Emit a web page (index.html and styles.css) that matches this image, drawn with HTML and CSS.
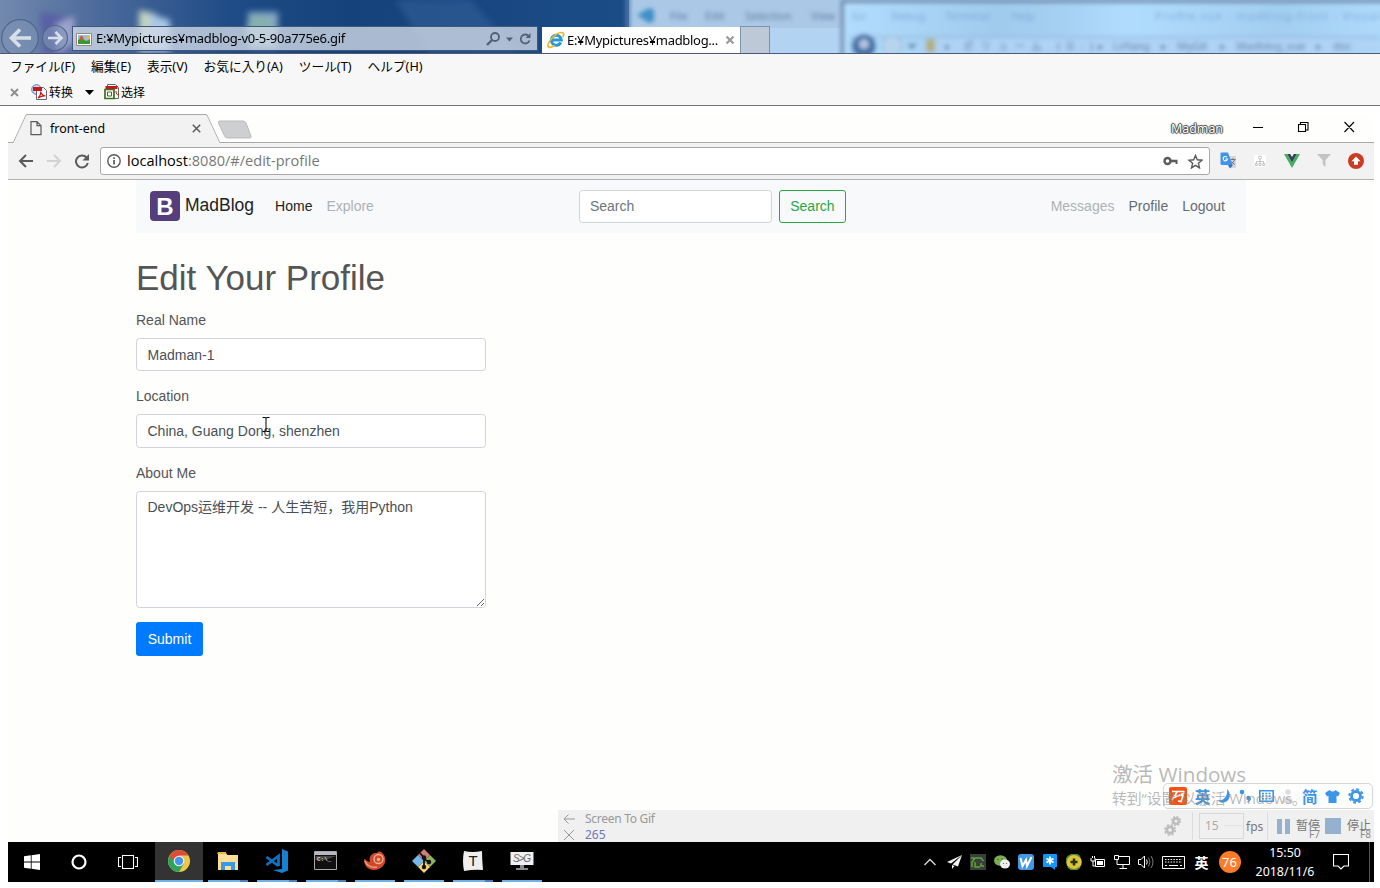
FILE: index.html
```
<!DOCTYPE html>
<html lang="ja">
<head>
<meta charset="utf-8">
<title>madblog</title>
<link rel="stylesheet" href="styles.css">
</head>
<body>
<header class="ie-frame">
  <svg class="glass" width="1380" height="54" viewBox="0 0 1380 54" aria-hidden="true">
    <defs>
      <linearGradient id="sky" x1="0" x2="1"><stop offset="0" stop-color="#7389ae"/><stop offset=".16" stop-color="#4a699b"/><stop offset=".36" stop-color="#1f4b86"/><stop offset=".55" stop-color="#16427b"/><stop offset="1" stop-color="#1c4d87"/></linearGradient>
      <linearGradient id="win" x1="0" x2="1"><stop offset="0" stop-color="#b2dcfd"/><stop offset=".28" stop-color="#a0cbec"/><stop offset=".4" stop-color="#a6d0f2"/><stop offset=".52" stop-color="#b0dcfd"/><stop offset=".8" stop-color="#a2cef0"/><stop offset="1" stop-color="#aedafb"/></linearGradient>
      <filter id="soft" x="-20%" y="-50%" width="140%" height="200%"><feGaussianBlur stdDeviation="3"/></filter>
      <filter id="softer" x="-20%" y="-50%" width="140%" height="200%"><feGaussianBlur stdDeviation="2"/></filter>
    </defs>
    <rect width="640" height="54" fill="url(#sky)"/>
    <g filter="url(#soft)">
      <path d="M395 0h75l50 54h-90z" fill="#2d5b94" opacity=".7"/>
      <path d="M40 12l32 6-2 36H44z" fill="#5a5fa5"/><path d="M56 24l18-8v26l-16 12z" fill="#b9bfe0" opacity=".7"/>
      <path d="M139 10l17 4v38h-17z" fill="#c3d5c0"/><path d="M150 14l20 6v32h-20z" fill="#aac8e8"/>
      <path d="M248 12h30v36h-30z" fill="#86a9c4"/><circle cx="260" cy="30" r="14" fill="#86b0ad"/>
    </g>
    <rect x="629" width="751" height="54" fill="#abc8e7"/>
    <rect x="629" y="28" width="216" height="26" fill="#b3d3f3"/>
    <g filter="url(#softer)">
      <rect x="626" y="-4" width="4" height="62" fill="#557eaf"/>
      <path d="M637 15l12-7 5 2v11l-5 2z" fill="#3f90c6"/>
      <g class="ghost" fill="#5f7c9d"><text x="670" y="20">File</text><text x="705" y="20">Edit</text><text x="745" y="20">Selection</text><text x="811" y="20">View</text></g>
      <rect x="841" y="0" width="545" height="60" fill="#5d7a9a"/>
      <rect x="844" y="3" width="545" height="55" fill="url(#win)"/>
      <g class="ghost" fill="#78a8d8"><text x="851" y="20">Go</text><text x="891" y="20">Debug</text><text x="945" y="20">Terminal</text><text x="1011" y="20">Help</text><text x="1155" y="20" textLength="225">Profile.vue - madblog-front - Visual</text></g>
      <path d="M851 54V37h530" fill="none" stroke="#85a8cb"/>
      <rect x="930" y="38" width="450" height="16" fill="#afd3f4"/>
      <circle cx="864" cy="46" r="12" fill="#4471a9"/><circle cx="864" cy="44" r="5" fill="#b4c6e0"/><circle cx="892" cy="46" r="10" fill="#b7d4ef" stroke="#8fb0d2"/>
      <path d="M907 44h10l-5 5z" fill="#437aa5"/><rect x="926" y="39" width="9" height="13" fill="#b0b07a"/>
      <g class="ghost" fill="#58779a"><text x="945" y="50">▸</text><text x="963" y="50" textLength="130">ボリューム (D:)</text><text x="1098" y="50">▸</text><text x="1113" y="50">LvYang</text><text x="1161" y="50">▸</text><text x="1177" y="50">MyGit</text><text x="1220" y="50">▸</text><text x="1236" y="50">Madblog_vue</text><text x="1316" y="50">▸</text><text x="1333" y="50">doc</text></g>
    </g>
  </svg>
  <div class="ie-bar">
    <svg class="ie-nav" width="70" height="35" viewBox="0 0 70 35"><g fill="#7e94b7" fill-opacity=".6" stroke="#536784" stroke-width="1.2"><circle cx="20" cy="19" r="18.3"/><circle cx="55" cy="19" r="12.5"/></g><g fill="none" stroke="#d8dfe9"><path d="M31 19H12M20 10.500l-8.500 8.500 8.500 8.500" stroke-width="3.600"/><path d="M48 19h13M55.500 13l6 6-6 6" stroke-width="2.600"/></g></svg>
    <div class="ie-address">
      <svg width="16" height="16" viewBox="0 0 16 16"><path d="M.5 2.500h15v12H.5z" fill="#fff" stroke="#918b73"/><path d="M2 4h12v9H2z" fill="#8bc4ee"/><path d="M2 9l4-2 4 3 4-2v5H2z" fill="#3c9638"/><circle cx="5.500" cy="7" r="2" fill="#e25427"/><path d="M10 5h4l-2 5z" fill="#f5b92c"/></svg>
      <span class="t ie-url">E:¥Mypictures¥madblog-v0-5-90a775e6.gif</span>
      <svg class="ie-tools" width="48" height="20" viewBox="0 0 48 20"><g fill="none" stroke="#536174" stroke-width="1.800"><circle cx="9" cy="8" r="4"/><path d="M6 11l-5 5" stroke-width="2.400"/><path d="M43 7.500a4.500 4.500 0 1 0 .500 4"/></g><path d="M20 8.500h7l-3.500 4zM44.500 4v5h-5z" fill="#536174"/></svg>
    </div>
    <div class="ie-tab">
      <svg width="18" height="18" viewBox="0 0 18 18"><path d="M13.800 11.500A5 5 0 1 1 14.300 9H5" fill="none" stroke="#269ad9" stroke-width="3"/><path d="M1.500 16C-1 13 8 1 15 1.500c2 .300 2 2.500.800 4.500M1.500 16c1.500 1.200 4-.200 6-1.500" fill="none" stroke="#efb72c" stroke-width="1.700"/></svg>
      <span class="t ie-title">E:¥Mypictures¥madblog...</span>
      <svg width="10" height="10" viewBox="0 0 10 10"><path d="M1.500 1.500l7 7m0-7l-7 7" stroke="#999" stroke-width="2.200"/></svg>
    </div>
    <div class="ie-newtab"></div>
  </div>
</header>
<nav class="ie-menu"><span class="t">ファイル(F)</span><span class="t">編集(E)</span><span class="t">表示(V)</span><span class="t">お気に入り(A)</span><span class="t">ツール(T)</span><span class="t">ヘルプ(H)</span></nav>
<div class="ie-convert">
  <svg class="ie-x" width="9" height="9" viewBox="0 0 9 9"><path d="M1 1l7 7m0-7L1 8" stroke="#8d8d8d" stroke-width="1.800"/></svg>
  <svg width="17" height="16" viewBox="0 0 17 16"><circle cx="5.500" cy="5.500" r="4.800" fill="#c9dff3" stroke="#5180b3"/><path d="M5.500 3.500h7l3 3v9h-10z" fill="#fff" stroke="#666"/><path d="M2 3h9v4H2z" fill="#c9161c"/><path d="M7 14c3-3 3-5 2.500-6.500 1 3 2.500 4.500 5 4.500-3-.700-5 .500-7.500 2z" fill="none" stroke="#c9161c" stroke-width="1.200"/></svg>
  <span class="t">转换</span>
  <svg class="ie-caret" width="9" height="5" viewBox="0 0 9 5"><path d="M0 0h9L4.500 5z" fill="#000"/></svg>
  <svg width="16" height="16" viewBox="0 0 16 16"><path d="M3.500.500h8l3 3v11h-11z" fill="#fff" stroke="#666"/><path d="M1.500 2h12v3h-12z" fill="#c9161c"/><path d="M1 5.500h9v9H1z" fill="#fff" stroke="#3b6f20" stroke-width="1.700"/><path d="M3.500 8h4v4h-4z" fill="none" stroke="#3b6f20"/><path d="M12 7c0 3 1 4 3 4" stroke="#c9161c" fill="none"/></svg>
  <span class="t">选择</span>
</div>

<main class="viewer"><section class="capture">
  <div class="tabs">
    <svg class="tabs-shape" width="1366" height="29" viewBox="0 0 1366 29"><path d="M0 28.500h5.500L18 1.500q.500-1 2-1h177q1.500 0 2 1l12.500 27H1366" fill="none" stroke="#a9a9a9" stroke-width="1.200"/><path d="M5.500 29L18 2q.500-1 2-1h177q1.500 0 2 1l12.500 27z" fill="#f2f2f2"/><path d="M211 7h24q2 0 3 2l5 13q.500 2-1.500 2h-22q-2 0-3-2l-6-13q-.500-2 .500-2z" fill="#cdcfd1" stroke="#bbb"/></svg>
    <svg class="doc" width="12" height="15" viewBox="0 0 12 15"><path d="M1 .700h6l4 4v9H1zM7 .700v4h4" fill="none" stroke="#5a5a5a" stroke-width="1.200"/></svg>
    <span class="t tab-title">front-end</span>
    <svg class="tab-close" width="9" height="9" viewBox="0 0 9 9"><path d="M.800.800l7.400 7.400m0-7.400L.800 8.200" stroke="#5a5a5a" stroke-width="1.500"/></svg>
    <span class="t user">Madman</span>
    <svg class="winbtns" width="104" height="12" viewBox="0 0 104 12"><g fill="none" stroke="#000" stroke-width="1.100"><path d="M1 6.500h10M46.500 3.500h7v7h-7zM48.500 3.500v-2h7.500v7.500h-2.500M92.500 1l9.500 10M102 1l-9.500 10"/></g></svg>
  </div>
  <div class="toolbar">
    <svg class="arrows" width="76" height="16" viewBox="0 0 76 16"><g fill="none" stroke-width="2"><path d="M17 8H4M10 2L4 8l6 6" stroke="#5a5a5a"/><path d="M31 8h13M38 2l6 6-6 6" stroke="#d2d2d2"/><path d="M70.500 4.500A6 6 0 1 0 71.800 10" stroke="#5a5a5a"/></g><path d="M73 1v6.500h-6.500z" fill="#5a5a5a"/></svg>
    <div class="omnibox">
      <svg width="14" height="14" viewBox="0 0 14 14"><circle cx="7" cy="7" r="6.200" fill="none" stroke="#5a5a5a" stroke-width="1.400"/><path d="M6.200 6h1.700v4.500H6.200zM6.200 3.300h1.700V5H6.200z" fill="#5a5a5a"/></svg>
      <span class="t url">localhost<i>:8080/#/edit-profile</i></span>
      <svg class="keystar" width="40" height="15" viewBox="0 0 40 15"><circle cx="4.500" cy="7" r="3" fill="none" stroke="#5a5a5a" stroke-width="2.400"/><path d="M8 5.800h6.500v4.200h-2V8.200H8z" fill="#5a5a5a"/><path d="M32.500 1.500l1.800 4.300 4.700.400-3.600 3.100 1.100 4.600-4-2.500-4 2.500 1.100-4.600L26 6.200l4.700-.400z" fill="none" stroke="#5a5a5a" stroke-width="1.400"/></svg>
    </div>
    <div class="exts">
      <svg width="17" height="17" viewBox="0 0 17 17"><path d="M7 4h9v12h-6z" fill="#d5d8da"/><path d="M1 .500h7L12.500 13H2q-1.500 0-1.500-1.500V1z" fill="#4194ea"/><path d="M8 13h5l-3 3.500z" fill="#2f6fca"/><path d="M10.500 7.500h5M13 6v1.500m2 0l-4 5m0-3l4 3" stroke="#777" fill="none"/><path d="M7 5.200a2.200 2.200 0 1 0 .500 1.800H5.500" fill="none" stroke="#fff" stroke-width="1.100"/></svg>
      <svg width="12" height="12" viewBox="0 0 12 12"><rect width="12" height="12" rx="2" fill="#fff"/><g fill="none" stroke="#c2c2c2"><circle cx="6" cy="2.500" r="1.500"/><path d="M6 4v4M2.500 8V6.500h7V8"/><path d="M1.200 8.500h2v2h-2zM5 8.500h2v2H5zM8.800 8.500h2v2h-2z"/></g></svg>
      <svg width="16" height="14" viewBox="0 0 16 14"><path d="M0 0h3.200L8 8.500 12.800 0H16L8 14z" fill="#41b35d"/><path d="M3.200 0H6.200L8 3l1.800-3h3L8 8.500z" fill="#35425a"/></svg>
      <svg width="14" height="13" viewBox="0 0 14 13"><path d="M0 0h14L8.500 6v7L5.700 10.500V6z" fill="#c3c3c3"/></svg>
      <svg width="16" height="16" viewBox="0 0 16 16"><circle cx="8" cy="8" r="8" fill="#cb3d23"/><path d="M8 3.500l4.500 4.700H10v3.600H6V8.200H3.500z" fill="#fff"/></svg>
    </div>
  </div>

  <div class="page">
    <div class="navbar">
      <span class="logo">B</span><span class="t brand">MadBlog</span>
      <span class="t link-on">Home</span><span class="t link-off">Explore</span>
      <div class="search"><input class="field" placeholder="Search"><button class="btn-search">Search</button></div>
      <div class="right"><span class="t link-off">Messages</span><span class="t link">Profile</span><span class="t link">Logout</span></div>
    </div>
    <form class="profile">
      <h1>Edit Your Profile</h1>
      <label>Real Name</label><input class="field" value="Madman-1">
      <label class="second">Location</label><input class="field tall" value="China, Guang Dong, shenzhen">
      <label class="second">About Me</label><textarea class="field area">DevOps运维开发 -- 人生苦短，我用Python</textarea>
      <button class="btn-submit" type="button">Submit</button>
    </form>
    <svg class="ibeam" width="8" height="17" viewBox="0 0 8 17"><path d="M.500 1.500H3l1 .500 1-.500h2.500M.500 15.500H3l1-.500 1 .500h2.500M4 2v13" fill="none" stroke="#000"/></svg>
  </div>

  <div class="recorder">
    <div class="rec-left">
      <svg width="12" height="10" viewBox="0 0 12 10"><path d="M12 5H1M5.500.500L1 5l4.500 4.500" fill="none" stroke="#999"/></svg><span class="t rec-name">Screen To Gif</span>
      <svg width="12" height="10" viewBox="0 0 12 10"><path d="M1 0l10 10M11 0L1 10" fill="none" stroke="#999"/></svg><span class="t count">265</span>
    </div>
    <svg class="gears" width="18" height="20" viewBox="0 0 18 20"><g fill="none" stroke="#bdbdbd"><circle cx="6" cy="14" r="3.200" stroke-width="2.800"/><circle cx="6" cy="14" r="5.200" stroke-width="1.600" stroke-dasharray="2.300 1.800"/><circle cx="12" cy="5" r="2.700" stroke-width="2.400"/><circle cx="12" cy="5" r="4.400" stroke-width="1.400" stroke-dasharray="1.900 1.550"/></g></svg>
    <div class="fpswrap"><div class="fpsbox">15</div></div><span class="t fps">fps</span>
    <div class="rec-btn pause"><svg width="13" height="15" viewBox="0 0 13 15"><path d="M0 0h5v15H0zM8 0h5v15H8z" fill="#94b1d0"/></svg><span class="t">暂停</span><small>F7</small></div>
    <div class="rec-btn stop"><svg width="16" height="16" viewBox="0 0 16 16"><path d="M0 0h16v16H0z" fill="#94b1d0"/></svg><span class="t">停止</span><small>F8</small></div>
  </div>

  <div class="ime">
    <svg width="18" height="18" viewBox="0 0 18 18"><rect width="18" height="18" rx="2" fill="#fa5212"/><path d="M3 4.500h12.500M8 5L3 13M7.500 8.500h6.500l-2 6-3-.500M15.500 6L4 11" fill="none" stroke="#fff" stroke-width="1.700"/></svg>
    <b>英</b>
    <svg width="13" height="14" viewBox="0 0 13 14"><path d="M9 0c5 5 3 12-3 13.500-2.500.500-5-.500-6-2C6 12 10 7 9 0z" fill="#3b96e8"/></svg>
    <svg width="13" height="14" viewBox="0 0 13 14"><circle cx="3" cy="3" r="2.300" fill="#3b96e8"/><circle cx="9.500" cy="9" r="2.200" fill="#3b96e8"/><path d="M11.500 9c0 2-1 3-3 4" fill="none" stroke="#3b96e8" stroke-width="1.200"/></svg>
    <svg width="15" height="12" viewBox="0 0 15 12"><path d="M.800.800h13.400v10.400H.800z" fill="none" stroke="#3b96e8" stroke-width="1.600"/><path d="M3 3.500h9M3 6h9M3 8.700h9" stroke="#3b96e8" stroke-width="1.500" stroke-dasharray="2 1.300"/></svg>
    <svg width="12" height="14" viewBox="0 0 12 14"><g fill="#ddd"><circle cx="6" cy="3" r="2.800"/><path d="M1 14c0-8 10-8 10 0z"/></g></svg>
    <b>简</b>
    <svg width="15" height="13" viewBox="0 0 15 13"><path d="M4.500 0q3 3 6 0L15 3l-2 3.500-1.500-.700V13h-8V5.800L2 6.500 0 3z" fill="#3b96e8"/></svg>
    <svg width="16" height="16" viewBox="0 0 16 16"><circle cx="8" cy="8" r="4.500" fill="none" stroke="#3b96e8" stroke-width="2.800"/><circle cx="8" cy="8" r="6.700" fill="none" stroke="#3b96e8" stroke-width="2" stroke-dasharray="2.900 2.360"/></svg>
  </div>
  <div class="activate"><span class="t big">激活 Windows</span><span class="t small">转到“设置”以激活 Windows。</span></div>

  <footer class="taskbar">
    <div class="start">
      <svg width="16" height="16" viewBox="0 0 16 16"><path d="M0 2.200L6.800 1.300V7.500H0zM7.600 1.200L16 0v7.500H7.600zM0 8.400h6.800v6.300L0 13.800zM7.600 8.400H16V16l-8.400-1.200z" fill="#fff"/></svg>
      <svg width="16" height="16" viewBox="0 0 16 16"><circle cx="8" cy="8" r="6.500" fill="none" stroke="#fff" stroke-width="2.200"/></svg>
      <svg width="20" height="14" viewBox="0 0 20 14"><g fill="none" stroke="#fff" stroke-width="1.100"><path d="M4.500.500h11v13h-11zM3 2.500H.500v9H3M17 2.500h2.500v9H17"/></g></svg>
    </div>
    <div class="app active"><svg width="22" height="22" viewBox="0 0 22 22"><circle cx="11" cy="11" r="11" fill="#efc84a"/><path d="M11 11L1.500 5.500A11 11 0 0 0 11 22l5-8.500z" fill="#2fa25b"/><path d="M1.500 5.500A11 11 0 0 1 20.500 5.500H11L7 13z" fill="#dc4c36"/><circle cx="11" cy="11" r="5.300" fill="#f3f3f3"/><circle cx="11" cy="11" r="4.200" fill="#4795ee"/></svg></div>
    <div class="app multi"><svg width="22" height="19" viewBox="0 0 22 19"><path d="M1 1h8l1.500 2H21v15H1z" fill="#fedd94"/><path d="M0 2h9V0H1z" fill="#e5b54a"/><path d="M4 18v-8h14v8h-4v-4H8v4z" fill="#369ae6"/></svg></div>
    <div class="app multi"><svg width="24" height="24" viewBox="0 0 24 24"><path d="M17 0l6 2.500v19L17 24 8 21l9-1z" fill="#1481d2"/><path d="M1.500 8l12 9M1.500 16l12-9v10" fill="none" stroke="#0c72c2" stroke-width="2.800"/></svg></div>
    <div class="app multi"><svg width="24" height="20" viewBox="0 0 24 20"><path d="M.500.500h22v18H.500z" fill="#101010" stroke="#a8a8a8"/><path d="M1 1h21v3H1z" fill="#b5b9bf"/><path d="M11 9H1.500V5H22z" fill="#454545"/><text class="cmd" x="3" y="10">C:\_</text></svg></div>
    <div class="app"><svg width="24" height="20" viewBox="0 0 24 20"><path d="M1 8c2 0 3 3 6 3C5 6 10 1 14 2c2-3 5-1 7 2 4 7-1 14-10 15C5 19 1 15 1 8z" fill="#cf4a2b"/><circle cx="15.500" cy="8" r="4.500" fill="none" stroke="#f2b096" stroke-width="1.300"/><circle cx="15.500" cy="8.500" r="1.700" fill="#f2b096"/><path d="M2 10c2 5 6 7 12 6" fill="none" stroke="#f19b7b" stroke-width="1.500"/></svg></div>
    <div class="app"><svg width="24" height="24" viewBox="0 0 24 24"><path d="M12 0l6 6-6 6-6-6z" fill="#d17d78"/><path d="M6 6l6 6-6 6-6-6z" fill="#75b8ec"/><path d="M18 6l6 6-6 6-6-6z" fill="#8db45a"/><path d="M12 12l6 6-6 6-6-6z" fill="#f7d27b"/><path d="M8 4l4 5v9M12 10l5 3" fill="none" stroke="#111" stroke-width="1.800"/><g fill="#111"><circle cx="12" cy="8.500" r="2.200"/><circle cx="12" cy="18" r="2.200"/><circle cx="17" cy="13" r="2.200"/></g></svg></div>
    <div class="app multi"><svg width="22" height="22" viewBox="0 0 22 22"><path d="M2 1q8 2 18 0 0 9 1 19-8-1-19 1Q0 11 2 1z" fill="#eee"/><text class="typora" x="6.500" y="16">T</text></svg></div>
    <div class="app"><svg width="24" height="20" viewBox="0 0 24 20"><path d="M.500 1h23v13H.500z" fill="#f0f0f0"/><path d="M10 14h4v3h4v2H6v-2h4z" fill="#89898d"/><text class="stg" x="3" y="11" textLength="18">S&gt;G</text></svg></div>
    <div class="tray">
      <svg width="12" height="8" viewBox="0 0 12 8"><path d="M.500 7L6 1.500 11.500 7" fill="none" stroke="#ddd" stroke-width="1.300"/></svg>
      <svg width="16" height="16" viewBox="0 0 16 16"><path d="M16 1L1 8l4 1.500zM16 1L6.500 10.500l5.500 2zM6 11v4l2.500-3z" fill="#f2f2f2"/></svg>
      <svg width="16" height="16" viewBox="0 0 16 16"><path d="M0 0h16v16H0z" fill="#3b3e3a"/><path d="M2 13V8l3-4h6l2.500 3M1 4h3M5 8v5h5M14 12h-3V9" fill="none" stroke="#57a934" stroke-width="1.500"/></svg>
      <svg width="16" height="14" viewBox="0 0 16 14"><ellipse cx="6.500" cy="5.500" rx="6.500" ry="5.300" fill="#7aae55"/><ellipse cx="11" cy="9" rx="5" ry="4.500" fill="#eee"/><g fill="#47692f"><circle cx="4" cy="4.500" r=".8"/><circle cx="8" cy="4" r=".8"/><circle cx="9.500" cy="8.500" r=".6"/><circle cx="12.500" cy="8.500" r=".6"/></g></svg>
      <svg width="16" height="16" viewBox="0 0 16 16"><rect width="16" height="16" rx="3" fill="#4298e9"/><path d="M2.500 4l2 8 3.500-6 1 6L13.500 3" fill="none" stroke="#fff" stroke-width="2"/></svg>
      <svg width="14" height="16" viewBox="0 0 14 16"><path d="M1 0h12q1 0 1 1v12h-2v3l-4-3H0V1z" fill="#1296fa"/><path d="M7 2.500v8M3.500 4.500l7 4M10.500 4.500l-7 4" stroke="#fff" stroke-width="1.900"/></svg>
      <svg width="16" height="16" viewBox="0 0 16 16"><circle cx="8" cy="8" r="7.800" fill="#ddc43b"/><path d="M0 8a8 8 0 0 1 14-5M2 13a8 8 0 0 0 12 0" fill="none" stroke="#54913b" stroke-width="1.600"/><path d="M8 4.500v7M4.500 8h7" stroke="#243411" stroke-width="2.500"/></svg>
      <svg width="16" height="12" viewBox="0 0 16 12"><g fill="none" stroke="#fff"><path d="M5.500 10.500V3.500h9v7zM1 2v3h4V2M2.500 0v2M4.500 0v2M3 5v5h2"/></g><path d="M7 5h6v4H7z" fill="#fff"/></svg>
      <svg width="16" height="14" viewBox="0 0 16 14"><g fill="none" stroke="#fff"><path d="M5 1.500h10.500v8H3V5M.500.500h4v4h-4zM9 10v3M5.500 13.500H13"/></g></svg>
      <svg width="16" height="14" viewBox="0 0 16 14"><path d="M.500 4.500H3L6.500 1v12L3 9.500H.500z" fill="none" stroke="#fff"/><path d="M8.500 4.500q1.500 2.500 0 5" fill="none" stroke="#fff"/><path d="M10.500 2.500q3 4.500 0 9M13 1q4 6 0 12" fill="none" stroke="#777"/></svg>
      <svg width="23" height="13" viewBox="0 0 23 13"><path d="M.500.500h22v12H.500z" fill="none" stroke="#fff"/><path d="M3 3.500h17M3 6h17" stroke="#fff" stroke-dasharray="1.500 1.300"/><path d="M3 9.500h2M7 9.500h9M18 9.500h2" stroke="#fff"/></svg>
      <b class="lang">英</b>
      <span class="hot">76</span>
      <div class="clock"><span>15:50</span><span>2018/11/6</span></div>
      <svg class="note" width="16" height="16" viewBox="0 0 16 16"><path d="M.500.500h15v11.500h-4.500L8 15l-3-3H.500z" fill="none" stroke="#fff" stroke-width="1.100"/></svg>
    </div>
  </footer>
</section></main>
</body>
</html>
```
FILE: styles.css
```
* { box-sizing: border-box; }
body { margin: 0; width: 1380px; height: 888px; overflow: hidden; background: #fff; color: #000; font-family: "Noto Sans", "Noto Sans CJK JP", sans-serif; display: flex; flex-direction: column; }
svg { display: block; flex: none; }
.t { white-space: nowrap; flex: none; }

.ie-frame { position: relative; height: 54px; border-bottom: 1px solid #4a5a78; overflow: hidden; flex: none; }
.glass { position: absolute; left: 0; top: 0; }
.ghost { font: 11px "Noto Sans", "Noto Sans CJK JP", sans-serif; }
.ie-bar { position: relative; display: flex; padding-top: 19px; height: 53px; }
.ie-nav { margin-right: 2px; }
.ie-address { margin-top: 7px; width: 466px; height: 25px; display: flex; align-items: center; padding: 0 3px 0 3px; background: rgba(206, 216, 230, .8); border: 1px solid #40587c; }
.ie-url { margin: -2px 0 0 4px; font-size: 13px; line-height: 16px; letter-spacing: -.29px; }
.ie-tools { margin-left: auto; }
.ie-tab { margin: 8px 0 0 4px; width: 198px; height: 26px; background: #fff; display: flex; align-items: center; padding: 0 5px; }
.ie-title { margin: -1px 0 0 2px; font-size: 13px; width: 158px; letter-spacing: -.3px; }
.ie-newtab { margin-top: 7px; width: 30px; height: 27px; background: #bdc9d7; border: 1px solid #7e91aa; border-bottom: 0; }
.ie-menu { height: 25px; background: #f7f7f7; display: flex; gap: 16px; padding-left: 10px; font-size: 12.7px; line-height: 25px; flex: none; }
.ie-convert { height: 27px; background: #f7f7f7; border-bottom: 1px solid #727272; display: flex; align-items: center; padding: 0 10px; font: 12px/24px "Noto Sans CJK SC", sans-serif; flex: none; }
.ie-x { margin-right: 12px; }
.ie-convert .t { margin-left: 1px; }
.ie-caret { margin: 0 10px 0 12px; }

.viewer { padding: 8px 6px 6px 8px; background: #fff; }
.capture { position: relative; width: 1366px; height: 768px; background: #fefefd; display: flex; flex-direction: column; }
.tabs { position: relative; height: 29px; display: flex; align-items: center; padding-left: 22px; }
.tabs-shape { position: absolute; left: 0; top: 0; }
.tabs > :not(.tabs-shape) { position: relative; }
.tab-title { margin-left: 8px; font-size: 12.4px; width: 142px; }
.user { margin-left: 970px; width: 81px; font-size: 12.4px; color: #fff; text-shadow: 0 0 1px #444, 1px 0 1px #444, -1px 0 1px #444, 0 1px 1px #444, 0 -1px 1px #444; }
.winbtns { margin-bottom: 3px; }
.toolbar { height: 37px; background: #f2f2f2; border-bottom: 1px solid #b1b1b1; display: flex; align-items: center; padding-left: 8px; }
.arrows, .exts { margin-bottom: 1px; }
.omnibox { margin-left: 8px; width: 1110px; height: 28px; border: 1px solid #a8a8a8; border-radius: 3px; background: #fff; display: flex; align-items: center; padding: 0 6px; }
.url { margin: -2px 0 0 6px; font: 14.550px "Open Sans", sans-serif; }
.url i { font-style: normal; color: #777; }
.keystar { margin-left: auto; }
.exts { flex: 1; display: flex; align-items: center; justify-content: space-between; padding: 0 10px; }

.page { height: 662px; position: relative; padding-left: 128px; font: 14px/21px "Liberation Sans", "Noto Sans CJK SC", sans-serif; flex: none; }
.navbar { width: 1110px; height: 53px; background: #f8f9fb; display: flex; align-items: center; padding: 0 21px 0 14px; color: #666c74; }
.logo { width: 30px; height: 30px; margin-bottom: 1px; border-radius: 4px; background: #563d7c; color: #fff; font: bold 24px/31px "Liberation Sans", sans-serif; text-align: center; }
.brand { margin-left: 5px; font-size: 17.5px; color: #222; margin-bottom: 2px; }
.link-on { margin: 0 14px 0 21px; color: #222; }
.link-off { color: #adb2b6; }
.search { display: flex; gap: 7px; margin-left: 205px; }
.search .field { width: 193px; padding: 0 10px 2px; }
.btn-search { width: 67px; height: 33px; border: 1px solid #28a745; border-radius: 3px; background: transparent; color: #28a745; font: inherit; padding: 0; }
.right { margin-left: auto; display: flex; gap: 14px; }
.field { display: block; width: 350px; height: 33px; margin: 0; border: 1px solid #ced4da; border-radius: 3.500px; background: #fff; padding: 0 10.500px; font: inherit; color: #495057; outline: 0; }
.field::placeholder { color: #6c757d; }
.tall { height: 34px; }
.area { height: 117px; padding-top: 5px; }
.profile { padding-top: 24px; width: 350px; color: #555; }
h1 { margin: 0 0 11px; font-size: 35px; line-height: 42px; font-weight: 400; color: #555; white-space: nowrap; }
label { display: block; margin-bottom: 7px; }
.second { margin-top: 15px; }
.btn-submit { display: block; margin-top: 14px; width: 67px; height: 34px; border: 0; border-radius: 3px; background: #007bff; color: #fff; font: inherit; padding: 0; }
.ibeam { position: absolute; left: 254px; top: 236px; }

.recorder { position: absolute; left: 550px; top: 696px; width: 816px; height: 32px; background: #f0f0f0; display: flex; align-items: center; color: #777; font-size: 12px; }
.rec-left { display: grid; grid-template-columns: 22px auto; align-items: center; line-height: 16px; padding: 1px 0 0 5px; color: #999; width: 606px; }
.rec-name { letter-spacing: -.28px; }
.count { color: #7078b5; }
.gears { margin-right: 10px; }
.fpswrap { border-left: 1px solid #ddd; padding: 1px 0 1px 6px; }
.fpsbox { border: 1px solid #d8d8d8; width: 45px; height: 26px; padding: 0 0 0 5px; line-height: 23px; color: #aaa; }
.fpsbox::after { content: ""; display: inline-block; width: 18px; margin-left: 5px; vertical-align: 4px; border-top: 1px solid #e2e2e2; }
.fps { margin-left: 2px; width: 21px; }
.rec-btn { position: relative; display: flex; align-items: center; font-family: "Noto Sans CJK SC", sans-serif; }
.rec-btn .t { margin: -3px 0 0 6px; }
.rec-btn small { position: absolute; right: 0; bottom: 0; font: 10px/12px "Noto Sans", sans-serif; color: #888; }
.pause { border-left: 1px solid #ddd; padding-left: 9px; height: 28px; }
.stop { margin-left: 5px; height: 28px; }
.pause small, .stop small { bottom: 0; }
.ime { position: absolute; left: 1155px; top: 669px; width: 210px; height: 26px; border: 1px solid #d6d6d6; border-radius: 5px; background: #fff; display: flex; align-items: center; justify-content: space-between; padding: 0 8px 0 5px; color: #3b96e8; font: 15.500px/24px "Noto Sans CJK SC", sans-serif; }
.activate { position: absolute; left: 1104px; top: 648px; display: flex; flex-direction: column; color: rgba(140, 140, 140, .62); font-family: "Open Sans", "Noto Sans CJK SC", sans-serif; }
.big { font-size: 20.600px; line-height: 24px; }
.small { font-size: 14.750px; line-height: 24px; }

.taskbar { height: 40px; background: #000; display: flex; color: #fff; flex: none; }
.start { width: 147px; display: flex; align-items: center; gap: 31px; padding-left: 16px; }
.app { width: 40px; margin-right: 9px; display: flex; align-items: center; justify-content: center; border-bottom: 2px solid #71b1ea; }
.app.active { width: 48px; margin-right: 5px; background: #333; }
.multi { border-image: linear-gradient(90deg, #71b1ea 78%, #4c7dbd 78%) 2; border-width: 0 0 2px; }
.cmd { font: 6px "Liberation Mono", monospace; fill: #fff; }
.typora { font: 15px "Liberation Sans", sans-serif; fill: #222; }
.stg { font: italic 10px "Liberation Sans", sans-serif; fill: #666; }
.tray { margin-left: auto; display: grid; grid-template-columns: repeat(10, 24px) 31px 25px 31px 80px 32px; align-items: center; justify-items: center; margin-right: 4px; padding-right: 12px; border-right: 1px solid #555; }
.lang { font: bold 14px "Noto Sans CJK SC", sans-serif; }
.hot { width: 22px; height: 22px; border-radius: 50%; background: #fb7d29; font-size: 13px; line-height: 22px; text-align: center; }
.clock { display: flex; flex-direction: column; align-items: center; font-size: 12.400px; line-height: 19px; }
```
